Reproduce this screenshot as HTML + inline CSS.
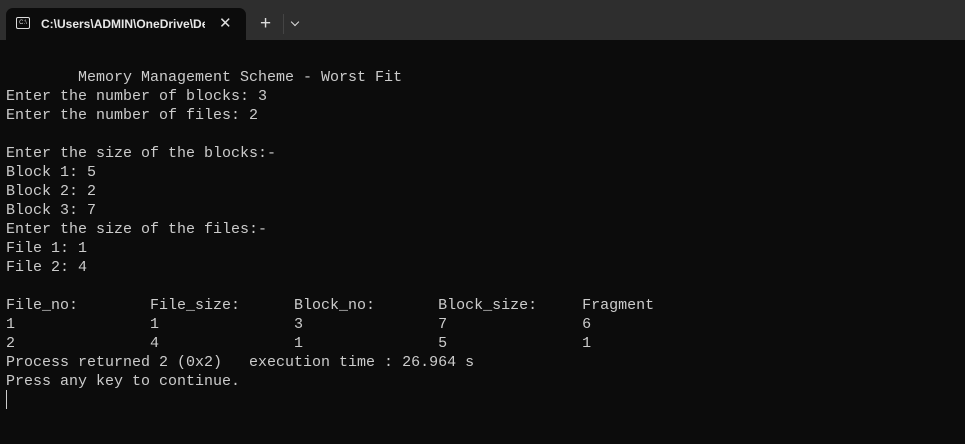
<!DOCTYPE html>
<html><head><meta charset="utf-8"><style>
html,body{margin:0;padding:0;width:965px;height:444px;overflow:hidden;background:#0c0c0c;}
.bar{position:absolute;left:0;top:0;width:965px;height:40px;background:#2e2e2e;}
.tab{position:absolute;left:6px;top:8px;width:240px;height:32px;background:#0c0c0c;border-radius:7px 7px 0 0;}
.ttl{position:absolute;left:41px;top:17px;font:bold 12px "Liberation Sans",sans-serif;color:#e8e8e8;white-space:nowrap;width:164px;overflow:hidden;}
.ico{position:absolute;left:16px;top:17px;width:12px;height:10px;border:1px solid #ddd;border-radius:2px;font:6px "Liberation Sans",sans-serif;color:#ddd;line-height:10px;text-align:center;}
.x{position:absolute;left:219px;top:14px;color:#ddd;font:15px "Liberation Sans",sans-serif;}
.plus{position:absolute;left:260px;top:13px;color:#ddd;font:19px "Liberation Sans",sans-serif;}
.sep{position:absolute;left:283px;top:14px;width:1px;height:20px;background:#444;}
.chev{position:absolute;left:292px;top:19px;width:5px;height:5px;border-right:1.3px solid #ddd;border-bottom:1.3px solid #ddd;transform:rotate(45deg);}
pre{position:absolute;left:6px;top:68px;margin:0;font:15px/19px "Liberation Mono",monospace;color:#cccccc;}
.cur{position:absolute;left:6px;top:390px;width:1px;height:19px;background:#ccc;}
</style></head><body>
<div class="bar"></div><div class="tab"></div>
<div class="ico">C:\</div>
<div class="ttl">C:\Users\ADMIN\OneDrive\Desktop</div>
<div class="x">✕</div><div class="plus">+</div><div class="sep"></div><div class="chev"></div>
<pre>        Memory Management Scheme - Worst Fit
Enter the number of blocks: 3
Enter the number of files: 2

Enter the size of the blocks:-
Block 1: 5
Block 2: 2
Block 3: 7
Enter the size of the files:-
File 1: 1
File 2: 4

File_no:        File_size:      Block_no:       Block_size:     Fragment
1               1               3               7               6
2               4               1               5               1
Process returned 2 (0x2)   execution time : 26.964 s
Press any key to continue.</pre>
<div class="cur"></div>
</body></html>
